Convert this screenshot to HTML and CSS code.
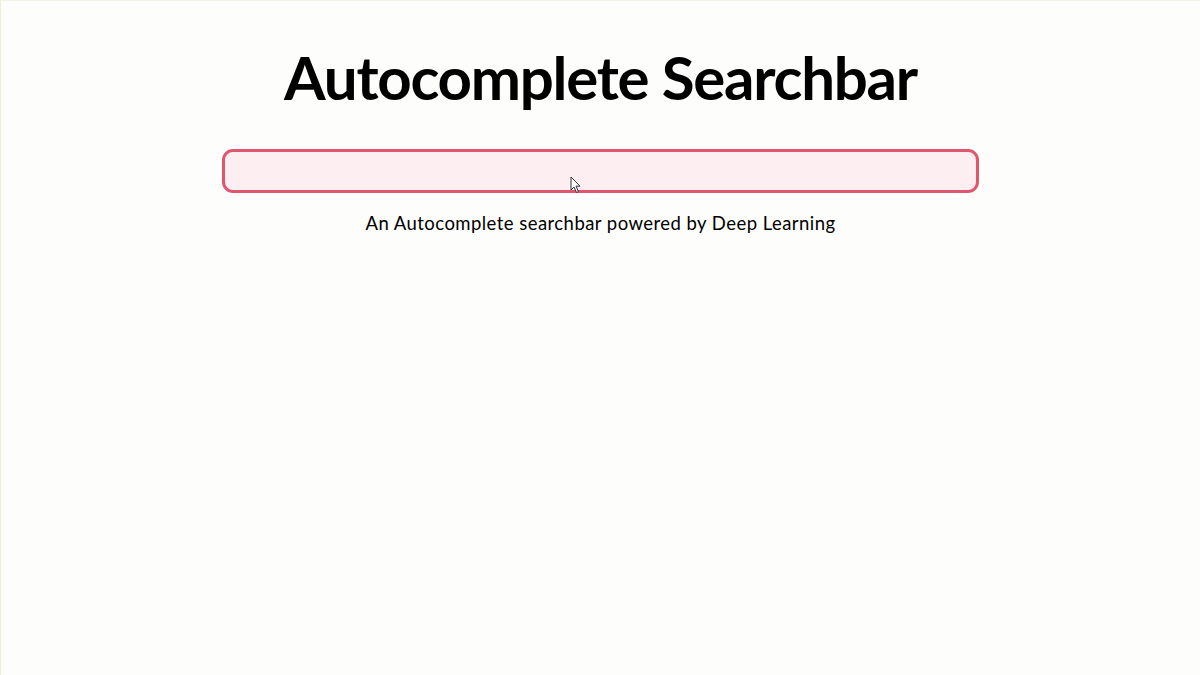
FILE: index.html
```html
<!DOCTYPE html>
<html>
<head>
<meta charset="utf-8">
<link rel="stylesheet" href="styles.css">
</head>
<body>
<div class="page">
  <h1 class="title">Autocomplete Searchbar</h1>
  <div class="search-wrap">
    <input class="search" type="text">
    <svg class="cursor" width="12" height="18" viewBox="0 0 12 18"><path d="M1 1 L1 14 L4 11 L6.5 16.5 L8.5 15.6 L6 10.2 L10 10.2 Z" fill="#fff" stroke="#333" stroke-width="1"/></svg>
  </div>
  <p class="subtitle">An Autocomplete searchbar powered by Deep Learning</p>
</div>
</body>
</html>
```
FILE: styles.css
```css
html, body {
  margin: 0;
  padding: 0;
  height: 100%;
}
body {
  background: #fdfdfb;
  font-family: "Lato", "Noto Sans", sans-serif;
  color: #000;
}
.page {
  box-sizing: border-box;
  height: 675px;
  border-left: 1px solid #eef0dc;
  border-top: 1px solid #f2f3e4;
  display: flex;
  flex-direction: column;
  align-items: center;
  padding-top: 39px;
}
.title {
  margin: 0;
  font-size: 60px;
  font-weight: 700;
  line-height: 74px;
  letter-spacing: -1.25px;
}
.search-wrap {
  position: relative;
  margin-top: 35px;
  width: 757px;
  height: 44px;
}
.search {
  box-sizing: border-box;
  width: 100%;
  height: 100%;
  border: 3px solid #e0566e;
  border-radius: 11px;
  background: #fdeef1;
  outline: none;
  margin: 0;
  padding: 0 12px;
}
.cursor {
  position: absolute;
  left: 348px;
  top: 27px;
}
.subtitle {
  margin: 18px 0 0;
  font-size: 18.5px;
  line-height: 24px;
  letter-spacing: 0.45px;
}
```
